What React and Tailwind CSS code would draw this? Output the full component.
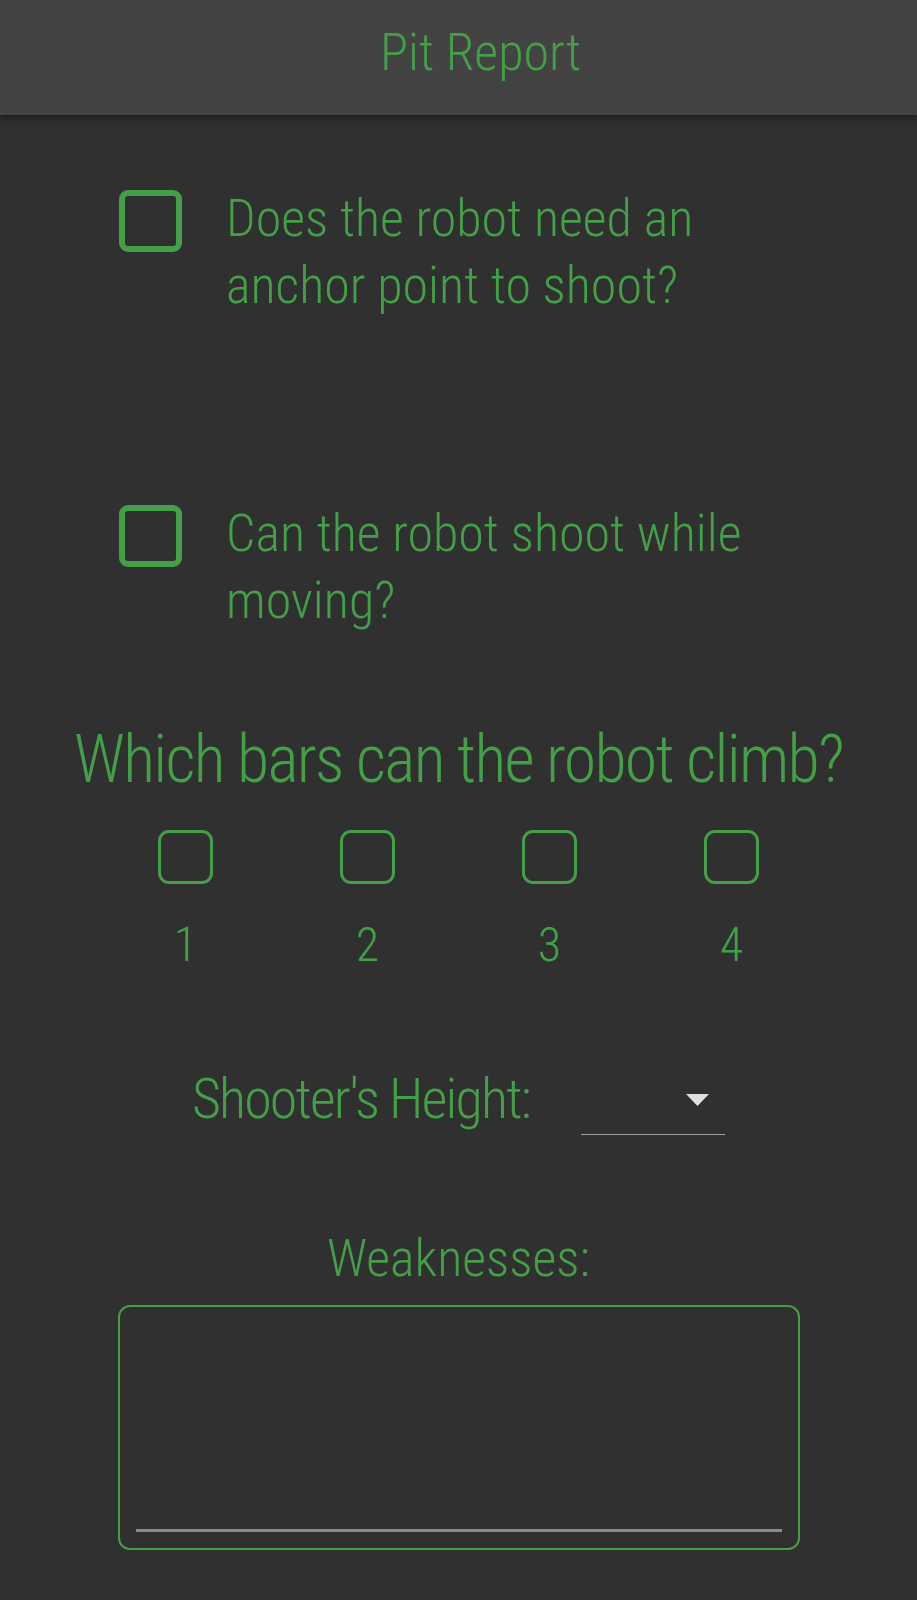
import React, { useState } from 'react';

const font = { fontFamily: '"Roboto Condensed", "Liberation Sans Narrow", Roboto, sans-serif' };

const BigCheck = ({ checked, onToggle }) => (
  <button
    onClick={onToggle}
    className="mt-[5px] w-[63px] h-[62px] shrink-0 rounded-[9px] border-[6px] border-[#43a047] bg-transparent"
  >
    {checked && <span className="block w-full h-full bg-[#43a047]" />}
  </button>
);

const Question = ({ label }) => {
  const [checked, setChecked] = useState(false);
  return (
    <div className="flex items-start pl-[119px]">
      <BigCheck checked={checked} onToggle={() => setChecked(!checked)} />
      <p className="ml-[44px] w-[560px] text-[52px] leading-[67px] font-light text-[#43a047]">{label}</p>
    </div>
  );
};

const BarBox = ({ n }) => {
  const [checked, setChecked] = useState(false);
  return (
    <div className="flex flex-col items-center">
      <button
        onClick={() => setChecked(!checked)}
        className={
          'w-[55px] h-[54px] rounded-[11px] border-[3px] border-[#43a047] ' +
          (checked ? 'bg-[#43a047]' : 'bg-transparent')
        }
      />
      <span className="mt-[33px] text-[48px] leading-[56px] font-light text-[#43a047]">{n}</span>
    </div>
  );
};

export default function App() {
  const [notes, setNotes] = useState('');

  return (
    <div className="min-h-[1600px] bg-[#303030]" style={font}>
      <header className="h-[115px] bg-[#434343] shadow-[0_3px_6px_rgba(0,0,0,0.45)] flex items-center justify-center pl-[44px]">
        <h1 className="text-[52px] leading-[60px] font-light text-[#43a047] -mt-[10px]">Pit Report</h1>
      </header>

      <div className="pt-[70px]">
        <Question label="Does the robot need an anchor point to shoot?" />
        <div className="h-[181px]" />
        <Question label="Can the robot shoot while moving?" />

        <h2 className="mt-[86px] text-center text-[66px] leading-[80px] tracking-[-1.7px] font-light text-[#43a047]">
          Which bars can the robot climb?
        </h2>

        <div className="mt-[30px] w-[728px] mx-auto grid grid-cols-4">
          {[1, 2, 3, 4].map((n) => (
            <BarBox key={n} n={n} />
          ))}
        </div>

        <div className="mt-[94px] flex items-start justify-center gap-[51px]">
          <span className="text-[56px] leading-[64px] tracking-[-1.8px] font-light text-[#43a047]">Shooter's Height:</span>
          <div className="relative w-[144px] h-[68px] border-b border-[#9e9e9e]">
            <svg className="absolute right-[16px] top-[27px]" width="23" height="12" viewBox="0 0 23 12">
              <polygon points="0,0 23,0 11.5,12" fill="#e0e0e0" />
            </svg>
          </div>
        </div>

        <p className="mt-[90px] text-center text-[52px] leading-[67px] font-light text-[#43a047]">Weaknesses:</p>

        <div className="mt-[13px] mx-auto w-[682px] h-[245px] rounded-[12px] border-2 border-[#43a047] px-[16px] pb-[16px] flex flex-col">
          <textarea
            value={notes}
            onChange={(e) => setNotes(e.target.value)}
            className="flex-1 w-full bg-transparent resize-none outline-none text-[#43a047] text-[40px] border-b-[3px] border-[#8a8a8a]"
          />
        </div>
      </div>
    </div>
  );
}
